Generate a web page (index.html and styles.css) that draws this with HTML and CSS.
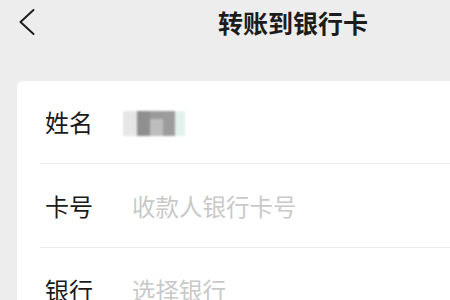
FILE: index.html
```html
<!DOCTYPE html>
<html lang="zh-CN">
<head>
<meta charset="utf-8">
<title>转账到银行卡</title>
<link rel="stylesheet" href="styles.css">
</head>
<body>
<div class="page">
  <header class="nav">
    <div class="back">
      <svg width="16" height="26" viewBox="0 0 16 26"><polyline points="14.5,1 1.5,13 14.5,25" fill="none" stroke="#1b1b1b" stroke-width="1.9" stroke-linecap="round" stroke-linejoin="round"/></svg>
    </div>
    <h1 class="title">转账到银行卡</h1>
  </header>
  <section class="card">
    <div class="row">
      <span class="label">姓名</span>
      <span class="blur">
        <i class="px px-a"></i><i class="px px-b"></i><i class="px px-c"></i><i class="px px-d"></i><i class="px px-e"></i>
      </span>
    </div>
    <div class="row">
      <span class="label">卡号</span>
      <span class="ph">收款人银行卡号</span>
    </div>
    <div class="row">
      <span class="label">银行</span>
      <span class="ph">选择银行</span>
    </div>
  </section>
</div>
</body>
</html>
```
FILE: styles.css
```css
html, body {
  margin: 0;
  padding: 0;
  background: #ededed;
  width: 450px;
  height: 300px;
  overflow: hidden;
}
.page {
  font-family: "Noto Sans CJK SC", "Noto Sans", sans-serif;
  color: #1a1a1a;
}
.nav {
  height: 44px;
  display: flex;
  align-items: center;
  margin-bottom: 37px;
}
.back {
  width: 16px;
  height: 26px;
  margin-left: 19px;
  display: flex;
}
.title {
  margin: 0 0 0 183px;
  font-size: 25px;
  font-weight: 600;
  line-height: 44px;
  color: #1c1c1c;
}
.card {
  background: #ffffff;
  margin-left: 17px;
  border-top-left-radius: 6px;
}
.row {
  height: 83px;
  margin-left: 23px;
  display: flex;
  align-items: center;
  border-bottom: 1px solid #ececec;
}
.row:first-child {
  height: 82px;
}
.label {
  width: 90px;
  padding-left: 5px;
  font-size: 24px;
  line-height: 30px;
  color: #1a1a1a;
}
.ph {
  font-size: 23.5px;
  line-height: 30px;
  color: #c9c9c9;
  margin-left: -3px;
}
.blur {
  display: flex;
  height: 25px;
  margin-left: -12px;
  margin-top: 3px;
  filter: blur(0.8px);
}
.px {
  display: block;
  height: 25px;
}
.px-a { width: 14px; background: #e6e6e6; }
.px-b { width: 13px; background: #8f8f8f; }
.px-c { width: 13px; background: linear-gradient(#9a9a9a 0 30%, #bdbdbd 30% 100%); }
.px-d { width: 12px; background: #9c9c9c; }
.px-e { width: 10px; background: #e3f1ed; }
```
